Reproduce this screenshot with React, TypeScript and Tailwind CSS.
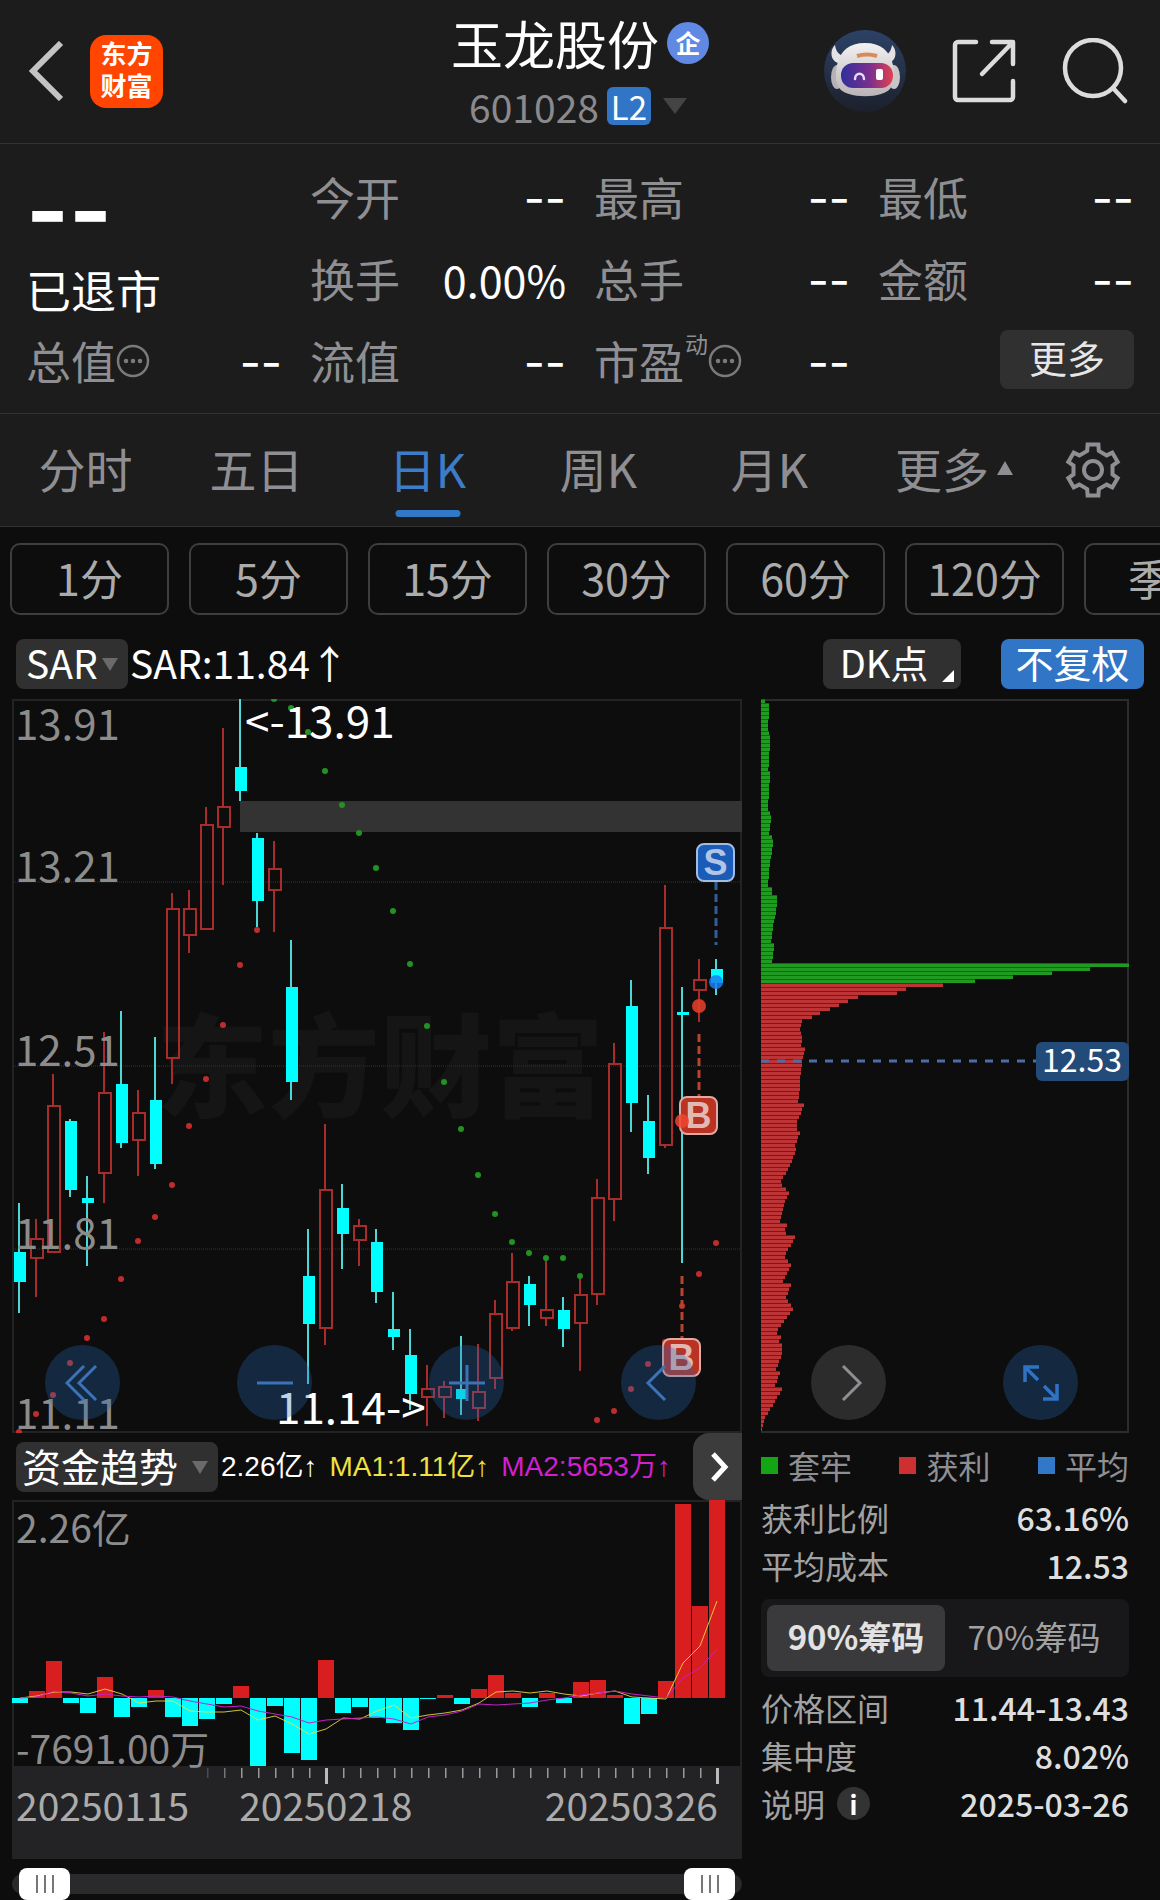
import React, { useState } from 'react';

type Candle = [number, number, number, number, number];

// up (1) or down (0), high, body top, body bottom, low
const candles: Candle[] = [
  [0, 504, 553, 583, 614], [1, 520, 539, 560, 598], [1, 375, 406, 554, 554], [0, 420, 422, 491, 498],
  [0, 477, 499, 504, 567], [1, 333, 393, 475, 504], [0, 312, 385, 444, 449], [1, 391, 413, 442, 477],
  [0, 338, 401, 465, 470], [1, 194, 209, 360, 385], [1, 191, 209, 237, 254], [1, 108, 125, 231, 231],
  [1, 29, 107, 129, 186], [0, 0, 68, 92, 102], [0, 134, 139, 202, 228], [1, 142, 169, 192, 233],
  [0, 241, 288, 383, 401], [0, 530, 577, 625, 685], [1, 425, 490, 630, 646], [0, 485, 509, 535, 570],
  [1, 520, 526, 542, 567], [0, 530, 543, 593, 604], [0, 593, 630, 638, 651], [0, 630, 656, 695, 711],
  [1, 666, 689, 699, 727], [1, 682, 687, 699, 719], [0, 637, 690, 700, 716], [1, 645, 692, 710, 722],
  [1, 601, 614, 680, 690], [1, 554, 582, 630, 632], [0, 577, 585, 606, 627], [1, 559, 610, 620, 627],
  [0, 598, 611, 630, 648], [1, 577, 595, 625, 672], [1, 480, 498, 596, 606], [1, 344, 364, 501, 522],
  [0, 281, 307, 404, 433], [0, 396, 422, 459, 475], [1, 186, 228, 447, 449], [0, 288, 313, 316, 564],
  [1, 260, 280, 292, 323], [0, 260, 270, 284, 296]
];

const sar = [
  733, 715, 696, 664, 639, 620, 580, 542, 518, 486, 427, 380, 326, 266, 231,
  0, 9, 33, 72, 106, 134, 169, 212, 265, 327, 383, 430, 476, 515, 543, 554, 559, 559, 577,
  721, 712, 690, 665, 643, 607, 575, 544
];

const flow = [
  -5, 7, 37, -5, -15, 21, -19, -9, 8, -19, -28, -21, -6, 12, -68, -8, -55, -62, 38, -15, -9,
  -20, -25, -32, -1, 3, -6, 9, 23, 5, -9, 5, -5, 16, 18, 3, -26, -16, 17, 194, 92, 198
];

const ma1 = [
  0, 2, 6, 6, 4, 9, 4, -5, -3, -3, -13, -14, -14, -12, -22, -18, -26, -36, -31, -20, -21,
  -13, -7, -20, -17, -15, -12, -5, 6, 7, 5, 7, 4, 2, 5, 7, 1, 0, -1, 35, 52, 97
];

const ma2 = [
  0, 1, 7, 5, 2, 4, 2, 1, 2, 1, -3, -6, -9, -8, -13, -16, -19, -25, -22, -21, -20,
  -19, -21, -26, -19, -17, -13, -6, -7, -6, -5, -2, 0, 3, 5, 7, 4, 2, 0, 20, 30, 49
];

// [row, width] pairs, the rows in between are interpolated
const chips: [number, number][] = [
  [0, 4], [1, 8], [3, 8], [5, 7], [7, 7], [8, 8], [10, 9], [15, 8], [17, 7], [18, 9], [22, 8], [27, 7], [28, 9],
  [30, 10], [33, 8], [34, 11], [36, 12], [40, 9], [46, 7], [47, 11], [48, 11], [49, 16], [51, 16], [55, 13], [60, 10],
  [61, 13], [65, 11], [66, 368], [67, 329], [68, 291], [69, 252], [70, 214], [71, 182], [72, 145], [73, 136],
  [74, 97], [75, 87], [76, 78], [77, 69], [78, 59], [79, 51], [80, 41], [82, 39], [84, 41], [86, 40], [87, 44],
  [89, 42], [92, 40], [95, 39], [96, 39], [100, 37], [101, 43], [105, 36], [107, 36], [108, 39], [111, 34],
  [112, 35], [116, 29], [120, 20], [121, 21], [123, 28], [125, 24], [130, 19], [131, 26], [132, 24], [133, 25],
  [134, 34], [138, 25], [139, 24], [141, 30], [145, 22], [146, 30], [149, 25], [152, 32], [157, 17], [158, 16],
  [159, 20], [160, 18], [161, 21], [163, 21], [167, 15], [168, 19], [171, 14], [172, 21], [175, 14], [179, 4],
  [182, 1]
];

const chipWidth = (row: number) => {
  for (let i = 1; i < chips.length; i++) {
    const [r1, w1] = chips[i];
    const [r0, w0] = chips[i - 1];
    if (row <= r1) return w0 + ((w1 - w0) * (row - r0)) / (r1 - r0);
  }
  return 1;
};

const cx = (i: number) => 7 + i * 17;
const line = (values: number[]) => values.map((v, i) => `${cx(i) + 1},${198 - v}`).join(' ');

const gear = Array.from({ length: 6 }, (_, k) => {
  const at = (deg: number, r: number) => {
    const a = ((k * 60 - 90 + deg) * Math.PI) / 180;
    return `${(30 + r * Math.cos(a)).toFixed(1)},${(30 + r * Math.sin(a)).toFixed(1)}`;
  };
  return [at(-17, 20), at(-12, 26), at(12, 26), at(17, 20)].join(' ');
}).join(' ');

const Dashes = () => <span className="font-['Inter',sans-serif] text-[46px]">--</span>;

const MoreDots = () => (
  <svg viewBox="0 0 34 34" className="size-[34px] shrink-0" fill="none" stroke="#7b7b7b">
    <circle cx="17" cy="17" r="15" strokeWidth="2.5" />
    <path d="M10 17h.01M17 17h.01M24 17h.01" strokeWidth="4.5" strokeLinecap="round" />
  </svg>
);

const Stat = ({ label, value, sup, more }: { label: string; value?: string; sup?: string; more?: boolean }) => (
  <div className="flex h-[82px] items-center justify-between">
    <dt className="flex items-center text-[#8f8f93]">
      {label}
      {sup && <span className="self-start pl-px text-[23px] leading-6">{sup}</span>}
      {more && <MoreDots />}
    </dt>
    <dd className="text-[43px] text-white">{value || <Dashes />}</dd>
  </div>
);

const Header = () => (
  <header className="grid h-36 grid-cols-[1fr_auto_1fr] items-center border-b border-[#333] pr-8 pb-px pl-7">
    <div className="flex items-center gap-6">
      <button aria-label="返回">
        <svg viewBox="0 0 38 60" className="h-[60px] w-[38px]" fill="none" stroke="#c4c4c4" strokeWidth="6">
          <path d="M33 2 5 30l28 28" />
        </svg>
      </button>
      <a href="#home" className="flex size-[73px] flex-col items-center justify-center rounded-2xl bg-[#ff4500] pb-1 text-[26px] leading-8 font-bold text-white">
        <span>东方</span>
        <span>财富</span>
      </a>
    </div>
    <div className="flex flex-col items-center gap-2 pb-1">
      <div className="flex items-center gap-2 pl-1">
        <h1 className="text-[52px] leading-[66px] text-white">玉龙股份</h1>
        <span className="flex size-[42px] items-center justify-center rounded-full bg-[#6089e4] text-[25px] font-bold text-white">企</span>
      </div>
      <button className="flex items-center gap-2 text-[39px] leading-[44px] text-[#8a8a8e]">
        601028
        <span className="flex h-[38px] w-11 items-center justify-center rounded-md bg-[#3075c6] text-[33px] text-white">L2</span>
        <svg viewBox="0 0 24 16" className="ml-1 h-4 w-6" fill="#444"><path d="M0 0h24L12 16z" /></svg>
      </button>
    </div>
    <div className="flex items-center justify-end gap-[46px]">
      <button aria-label="助手">
        <svg viewBox="0 0 82 82" className="size-[82px]">
          <defs>
            <linearGradient id="sky" x2="0" y2="1">
              <stop stopColor="#2c4266" /><stop offset="1" stopColor="#1c202b" />
            </linearGradient>
            <linearGradient id="visor">
              <stop stopColor="#2f2f9c" /><stop offset=".55" stopColor="#7a2f8e" /><stop offset="1" stopColor="#e0424f" />
            </linearGradient>
            <linearGradient id="shell" x2="0" y2="1">
              <stop stopColor="#f2f1f2" /><stop offset="1" stopColor="#b9b3b6" />
            </linearGradient>
          </defs>
          <circle cx="41" cy="41" r="41" fill="url(#sky)" />
          <path d="M11 15c-6 6-4 17 4 18l9-7c-7 1-12-3-13-11zM68 15c6 6 4 17-4 18l-9-7c7 1 12-3 13-11z" fill="#e4e2e4" />
          <ellipse cx="13" cy="47" rx="6" ry="12" fill="#b5b1b7" />
          <ellipse cx="70" cy="47" rx="6" ry="12" fill="#c9c4c8" />
          <path d="M41 13c16 0 25 8 28 22 3 16 0 26-12 29-9 3-23 3-32 0C13 61 10 51 13 35c3-14 12-22 28-22z" fill="url(#shell)" />
          <path d="M33 26c7-2 13-2 20 0" stroke="#d98a5c" strokeWidth="4" fill="none" />
          <rect x="17" y="33" width="52" height="25" rx="12" fill="url(#visor)" />
          <path d="M31 49c0-7 9-7 9 0" stroke="#e4dcff" strokeWidth="2.5" fill="none" strokeLinecap="round" />
          <rect x="52" y="39" width="7" height="11" rx="2" fill="#fff" />
        </svg>
      </button>
      <button aria-label="分享">
        <svg viewBox="0 0 64 64" className="size-16" fill="none" stroke="#dcdcdc" strokeWidth="4.5" strokeLinecap="round" strokeLinejoin="round">
          <path d="M24 3H6a3 3 0 0 0-3 3v52a3 3 0 0 0 3 3h52a3 3 0 0 0 3-3V42M40 3h21v22M60 4 30 35" />
        </svg>
      </button>
      <button aria-label="搜索">
        <svg viewBox="0 0 66 66" className="size-[66px]" fill="none" stroke="#dcdcdc" strokeWidth="4.5" strokeLinecap="round">
          <circle cx="31" cy="30" r="28" />
          <path d="m51 50 12 13" />
        </svg>
      </button>
    </div>
  </header>
);

const Quote = () => (
  <section className="border-b border-[#333] px-[26px] pt-3 pb-[11px] text-[45px] leading-[60px]">
    <dl className="grid grid-cols-4 gap-x-7">
      <div className="row-span-2 flex flex-col pt-[6px] text-white">
        <span className="font-['Inter',sans-serif] text-[92px] leading-[98px] font-bold">--</span>
        <span>已退市</span>
      </div>
      <Stat label="今开" />
      <Stat label="最高" />
      <Stat label="最低" />
      <Stat label="换手" value="0.00%" />
      <Stat label="总手" />
      <Stat label="金额" />
      <Stat label="总值" more />
      <Stat label="流值" />
      <Stat label="市盈" sup="动" more />
      <div className="flex h-[82px] items-center justify-end pb-1">
        <button className="h-[59px] w-[134px] rounded-lg bg-[#303030] pb-1 text-[38px] leading-[48px] text-[#e6e6e6]">更多</button>
      </div>
    </dl>
  </section>
);

const tabs = ['分时', '五日', '日K', '周K', '月K'];

const Tabs = () => {
  const [active, setActive] = useState('日K');
  return (
    <nav className="grid h-[113px] grid-cols-[repeat(5,171fr)_198fr_107fr] border-b border-[#333] text-[47px] text-[#8f8f93]">
      {tabs.map((tab) => (
        <button
          key={tab}
          onClick={() => setActive(tab)}
          className={tab === active ? 'relative pb-1 text-[#3d7cc9]' : 'relative pb-1'}
        >
          {tab}
          {tab === active && <span className="absolute bottom-[9px] left-1/2 h-[7px] w-[65px] -translate-x-1/2 rounded-full bg-[#3278c8]" />}
        </button>
      ))}
      <button className="flex items-center justify-center gap-2 pb-1">
        更多
        <svg viewBox="0 0 16 14" className="h-[14px] w-4" fill="#8f8f93"><path d="M8 0l8 14H0z" /></svg>
      </button>
      <button aria-label="设置" className="pl-[10px]">
        <svg viewBox="0 0 60 60" className="size-[60px]" fill="none" stroke="#8f8f93" strokeWidth="4">
          <polygon points={gear} />
          <circle cx="30" cy="30" r="9" />
        </svg>
      </button>
    </nav>
  );
};

const Periods = () => (
  <div className="flex gap-5 overflow-hidden px-[10px] pt-4 text-[43px] text-[#ababab]">
    {['1分', '5分', '15分', '30分', '60分', '120分', '季K'].map((p) => (
      <button key={p} className="h-[72px] w-[159px] shrink-0 rounded-[10px] border-2 border-[#3e3e3e] pb-1 leading-[60px]">{p}</button>
    ))}
  </div>
);

const Picker = ({ label, options, className }: { label: string; options: string[]; className: string }) => (
  <label className="relative flex shrink-0">
    <select aria-label={label} className={`h-[50px] appearance-none rounded-lg bg-[#303030] pb-1 text-[39px] leading-[46px] text-white ${className}`}>
      {options.map((o) => <option key={o}>{o}</option>)}
    </select>
    <svg viewBox="0 0 16 13" className="pointer-events-none absolute top-[19px] right-[10px] h-[13px] w-4" fill="#6a6a6a">
      <path d="M0 0h16L8 13z" />
    </svg>
  </label>
);

const Toolbar = () => (
  <div className="flex items-center pt-6 pr-4 pb-[10px] pl-4 text-[38px] leading-[46px] text-white">
    <Picker label="主图指标" options={['SAR', 'MA', 'BOLL']} className="w-28 pl-[10px]" />
    <span className="pb-1 pl-[2px] text-[39px]">SAR:11.84↑</span>
    <button className="relative ml-auto h-[50px] w-[138px] rounded-lg bg-[#303030] pr-4 pb-1">
      DK点
      <svg viewBox="0 0 12 12" className="absolute right-[7px] bottom-[7px] size-3" fill="#fff"><path d="M12 0v12H0z" /></svg>
    </button>
    <button className="ml-10 h-[50px] w-[143px] rounded-lg bg-[#3075c6] pb-1">不复权</button>
  </div>
);

const Mark = ({ x, y, text }: { x: number; y: number; text: string }) => {
  const sell = text === 'S';
  return (
    <g>
      <rect x={x} y={y} width="37" height="37" rx="7" fill={sell ? '#1a5cb8' : '#b93222'} stroke={sell ? '#a3bce2' : '#e0a9a3'} strokeWidth="2" />
      <text x={x + 18.5} y={y + 31} textAnchor="middle" fontSize="36" fontWeight="700" fill={sell ? '#b3c5e4' : '#e2b8b4'} className="font-['Liberation_Sans',sans-serif]">{text}</text>
    </g>
  );
};

const round = 'flex size-[75px] items-center justify-center rounded-full bg-[#2669b3]/30';

const KChart = () => (
  <div className="relative">
    <svg viewBox="0 0 730 734" className="block w-full">
      <text x="144" y="410" fontSize="112" fontWeight="900" fill="#151515">东方财富</text>
      <rect x="1" y="1" width="728" height="732" fill="none" stroke="#232323" strokeWidth="2" />
      {[183, 367, 550].map((y) => <path key={y} d={`M1 ${y}h728`} stroke="#333" strokeDasharray="1 1" />)}
      <rect x="228" y="102" width="502" height="31" fill="#333" />
      {candles.map(([up, high, top, bottom, low], i) => up ? (
        <g key={i} stroke="#a92c2c" strokeWidth="2" fill="none">
          <path d={`M${cx(i)} ${high}V${top}M${cx(i)} ${bottom}V${low}`} />
          <rect x={cx(i) - 5} y={top + 1} width="12" height={bottom - top - 2} />
        </g>
      ) : (
        <g key={i} fill="#00ffff">
          <rect x={cx(i) - 1} y={high} width="2" height={low - high} fill="#4fd6d6" />
          <rect x={cx(i) - 5} y={top} width="12" height={bottom - top} />
        </g>
      ))}
      {sar.map((y, i) => <circle key={i} cx={cx(i)} cy={y} r="3" fill={i > 14 && i < 34 ? '#229322' : '#c02c2c'} />)}
      <g fill="none" strokeWidth="3" strokeDasharray="8 4">
        <path d="M704 183v63" stroke="#345c9c" />
        <path d="M687 335v62M670 577v62" stroke="#b8432f" />
      </g>
      <circle cx="687" cy="307" r="7" fill="#e03d28" fillOpacity=".9" />
      <circle cx="704" cy="283" r="7" fill="#1c7ff0" fillOpacity=".85" />
      <Mark x={685} y={145} text="S" />
      <Mark x={668} y={398} text="B" />
      <Mark x={651} y={640} text="B" />
      <circle cx="670" cy="422" r="7" fill="#f04530" fillOpacity=".85" />
      <g fontSize="42" fill="#8c8c8c">
        <text x="3" y="41">13.91</text>
        <text x="3" y="183">13.21</text>
        <text x="3" y="367">12.51</text>
        <text x="3" y="550">11.81</text>
        <text x="3" y="730">11.11</text>
      </g>
      <g fontSize="44" fill="#fff">
        <text x="233" y="39">&lt;-13.91</text>
        <text x="264" y="725">11.14-&gt;</text>
      </g>
    </svg>
    <div className="absolute inset-x-0 bottom-[13px] flex justify-between pr-[46px] pl-[33px]">
      <button aria-label="最早" className={round}>
        <svg viewBox="0 0 36 36" className="size-9" fill="none" stroke="#3c72b8" strokeWidth="3"><path d="M19 1 2 18l17 17M31 1 14 18l17 17" /></svg>
      </button>
      <button aria-label="缩小" className={round}>
        <svg viewBox="0 0 36 36" className="size-9" fill="none" stroke="#3c72b8" strokeWidth="3"><path d="M0 18h36" /></svg>
      </button>
      <button aria-label="放大" className={round}>
        <svg viewBox="0 0 36 36" className="size-9" fill="none" stroke="#3c72b8" strokeWidth="3"><path d="M0 18h36M18 0v36" /></svg>
      </button>
      <button aria-label="左移" className={round}>
        <svg viewBox="0 0 36 36" className="size-9" fill="none" stroke="#3c72b8" strokeWidth="3"><path d="M24 1 7 18l17 17" /></svg>
      </button>
    </div>
  </div>
);

const FlowHeader = () => (
  <div className="flex h-[67px] items-center pl-1">
    <Picker label="副图指标" options={['资金趋势', '成交量', 'MACD']} className="w-[202px] pl-[6px]" />
    <div className="flex gap-3 pl-[3px] font-['Liberation_Sans','Noto_Sans_CJK_SC',sans-serif] text-[28px] whitespace-nowrap">
      <span className="text-white">2.26亿↑</span>
      <span className="text-[#f0e040]">MA1:1.11亿↑</span>
      <span className="text-[#d020d0]">MA2:5653万↑</span>
    </div>
    <button aria-label="下一个" className="ml-auto flex h-[67px] w-[49px] shrink-0 items-center justify-center rounded-l-2xl bg-[#3c3c3c] pl-1">
      <svg viewBox="0 0 18 30" className="h-[30px] w-[18px]" fill="none" stroke="#fff" strokeWidth="5"><path d="m2 2 12 13L2 28" /></svg>
    </button>
  </div>
);

const FlowChart = () => (
  <svg viewBox="0 0 730 268" className="block w-full">
    <rect x="1" y="1" width="728" height="266" fill="none" stroke="#232323" strokeWidth="2" />
    <g fontSize="39" fill="#8c8c8c">
      <text x="4" y="43">2.26亿</text>
      <text x="4" y="264">-7691.00万</text>
    </g>
    {flow.map((v, i) => (
      <rect key={i} x={i * 17} y={v > 0 ? 198 - v : 198} width="16" height={Math.abs(v)} fill={v > 0 ? '#d81e1e' : '#00ffff'} />
    ))}
    <polyline points={line(ma1)} fill="none" stroke="#f0e040" strokeOpacity=".85" />
    <polyline points={line(ma2)} fill="none" stroke="#c81ec8" />
  </svg>
);

const ticks = Array.from({ length: 31 }, (_, i) => i + 11);

const Axis = () => (
  <div className="h-[91px] bg-[#232325] text-[39px] leading-[38px] text-[#ababab]">
    <svg viewBox="0 0 730 17" className="block w-full">
      {ticks.map((i) => i === 18 || i === 41
        ? <rect key={i} x={cx(i)} y="0" width="3" height="16" fill="#bbb" />
        : <rect key={i} x={cx(i) + 1} y="0" width="1.5" height="10" fill="#999" opacity={Math.min(1, (i - 10) * 0.35)} />)}
    </svg>
    <div className="flex pr-6 pl-1">
      <span>20250115</span>
      <span className="pl-[50px]">20250218</span>
      <span className="ml-auto">20250326</span>
    </div>
  </div>
);

const thumb = "pointer-events-none absolute inset-x-[7px] top-0 h-8 appearance-none bg-transparent [&::-webkit-slider-thumb]:pointer-events-auto [&::-webkit-slider-thumb]:h-8 [&::-webkit-slider-thumb]:w-[51px] [&::-webkit-slider-thumb]:appearance-none [&::-webkit-slider-thumb]:rounded-lg [&::-webkit-slider-thumb]:bg-white [&::-webkit-slider-thumb]:bg-[linear-gradient(90deg,transparent_17px,#777_17px,#777_19px,transparent_19px,transparent_25px,#777_25px,#777_27px,transparent_27px,transparent_33px,#777_33px,#777_35px,transparent_35px)] [&::-webkit-slider-thumb]:bg-[length:100%_18px] [&::-webkit-slider-thumb]:bg-center [&::-webkit-slider-thumb]:bg-no-repeat";

const RangeBar = () => {
  const [from, setFrom] = useState(0);
  const [to, setTo] = useState(100);
  return (
    <div className="relative mt-[9px] flex h-8 items-center">
      <div className="h-5 w-full rounded-full bg-[#2a2a2c]" />
      <input type="range" aria-label="起始日期" value={from} onChange={(e) => setFrom(+e.target.value)} className={thumb} />
      <input type="range" aria-label="结束日期" value={to} onChange={(e) => setTo(+e.target.value)} className={thumb} />
    </div>
  );
};

const ChipChart = () => (
  <div className="relative">
    <svg viewBox="0 0 368 734" className="block w-full">
      <path d="M0 1h367v732H0" fill="none" stroke="#2c2c2c" strokeWidth="2" />
      {Array.from({ length: 183 }, (_, row) => {
        const w = Math.round(chipWidth(row));
        return (
          <g key={row}>
            <rect y={row * 4} width={w} height="1" fill={row < 71 ? '#0a6e0a' : '#8a1216'} />
            <rect y={row * 4 + 1} width={w} height="3" fill={row < 71 ? '#219a21' : '#bd3437'} />
          </g>
        );
      })}
      <path d="M0 362h276" stroke="#4a6ea6" strokeWidth="3" strokeDasharray="8 8" />
      <rect x="275" y="343" width="93" height="39" rx="6" fill="#234b7a" />
      <text x="321" y="373" textAnchor="middle" fontSize="32" fill="#fff">12.53</text>
    </svg>
    <div className="absolute inset-x-0 bottom-[13px] flex justify-between pr-[51px] pl-[50px]">
      <button aria-label="收起" className="flex size-[75px] items-center justify-center rounded-full bg-[#2c2c2c]">
        <svg viewBox="0 0 36 36" className="size-9" fill="none" stroke="#8f8f93" strokeWidth="3"><path d="m12 1 17 17-17 17" /></svg>
      </button>
      <button aria-label="全屏" className={round}>
        <svg viewBox="0 0 36 36" className="size-9" fill="none" stroke="#2f73c2" strokeWidth="3.5"><path d="M16 2H2v15M2 2l13 13M20 34h14V19M34 34 21 21" /></svg>
      </button>
    </div>
  </div>
);

const Row = ({ label, value, info }: { label: string; value: string; info?: boolean }) => (
  <div className="flex h-12 items-center justify-between">
    <dt className="flex items-center gap-3 text-[#a2a2a2]">
      {label}
      {info && <button aria-label="查看说明" className="size-[33px] rounded-full bg-[#333] text-[26px] leading-[33px] font-bold text-white">i</button>}
    </dt>
    <dd className="font-medium text-[#dedede]">{value}</dd>
  </div>
);

const ChipPanel = () => {
  const [range, setRange] = useState('90%筹码');
  return (
    <div className="text-[32px] leading-[48px]">
      <ul className="mt-2 mb-1 flex justify-between text-[#8f8f93]">
        <li className="flex items-center gap-[10px]"><span className="size-[17px] bg-[#14a514]" />套牢</li>
        <li className="flex items-center gap-[10px]"><span className="size-[17px] bg-[#cc3030]" />获利</li>
        <li className="flex items-center gap-[10px]"><span className="size-[17px] bg-[#3278c8]" />平均</li>
      </ul>
      <dl>
        <Row label="获利比例" value="63.16%" />
        <Row label="平均成本" value="12.53" />
      </dl>
      <div className="mt-[10px] mb-[6px] grid h-[78px] grid-cols-2 rounded-lg bg-[#18181a] p-[6px] text-[33px] leading-[60px]">
        {['90%筹码', '70%筹码'].map((r) => (
          <button
            key={r}
            onClick={() => setRange(r)}
            className={r === range ? 'rounded-lg bg-[#3a3a3c] pb-1 font-bold text-[#e2e2e2]' : 'rounded-lg pb-1 text-[#a2a2a2]'}
          >
            {r}
          </button>
        ))}
      </div>
      <dl>
        <Row label="价格区间" value="11.44-13.43" />
        <Row label="集中度" value="8.02%" />
        <Row label="说明" value="2025-03-26" info />
      </dl>
    </div>
  );
};

export default function App() {
  return (
    <div className="min-h-screen bg-[#0d0d0d] font-['Noto_Sans_CJK_SC',sans-serif]">
      <div className="bg-[#1c1c1c]">
        <Header />
        <Quote />
        <Tabs />
      </div>
      <Periods />
      <Toolbar />
      <main className="grid grid-cols-[730fr_368fr] gap-x-[19px] pr-[31px] pl-3">
        <div className="min-w-0">
          <KChart />
          <FlowHeader />
          <FlowChart />
          <Axis />
          <RangeBar />
        </div>
        <div className="min-w-0">
          <ChipChart />
          <ChipPanel />
        </div>
      </main>
    </div>
  );
}
